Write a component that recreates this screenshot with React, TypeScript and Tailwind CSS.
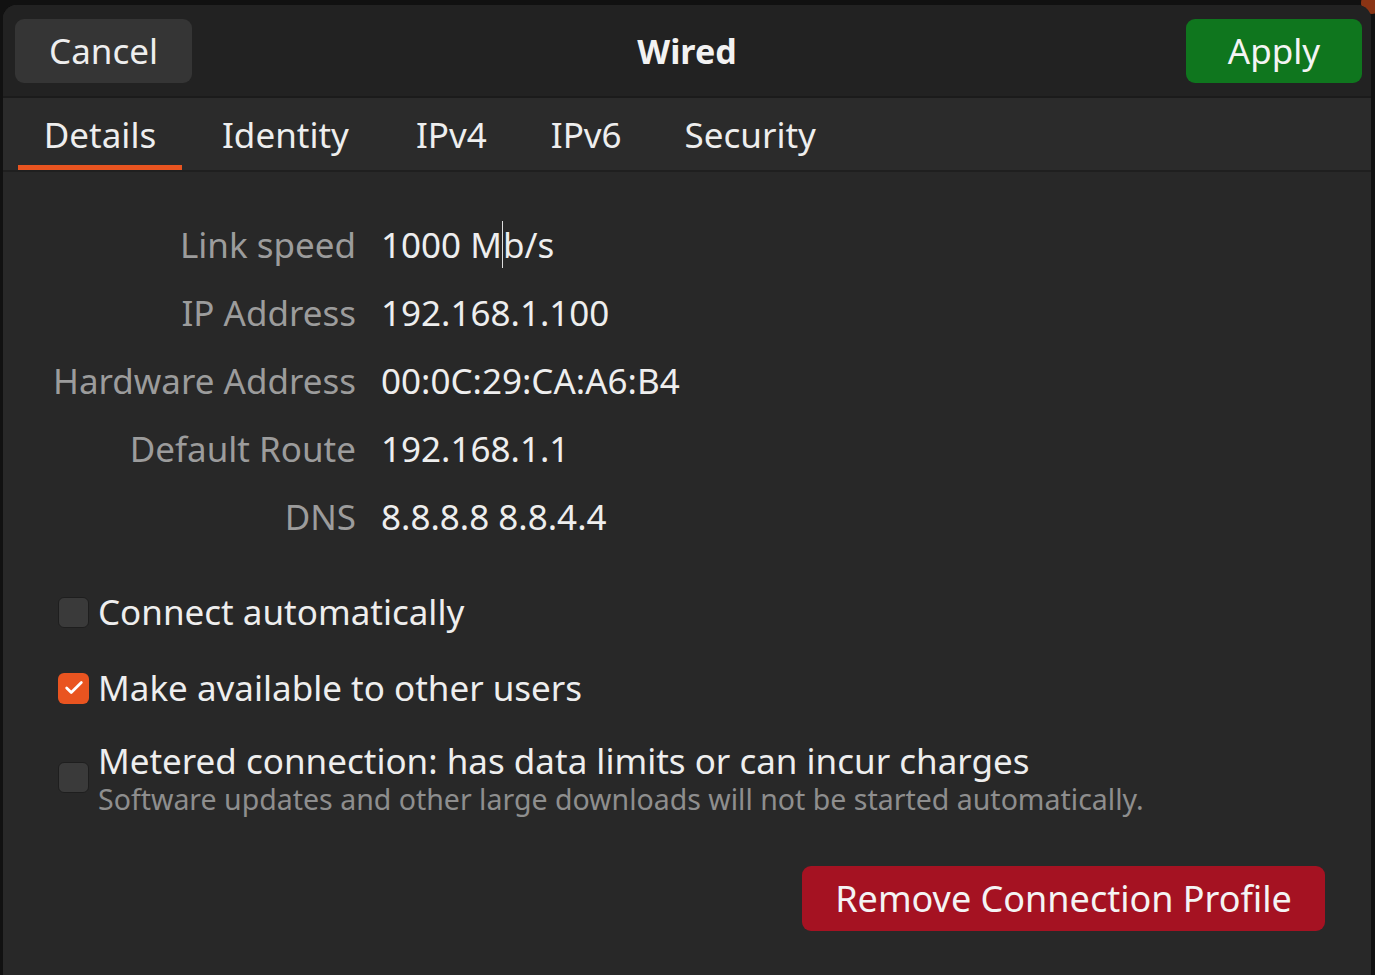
import { Check } from 'lucide-react';

const details = [
  { label: 'Link speed', value: '1000 Mb/s' },
  { label: 'IP Address', value: '192.168.1.100' },
  { label: 'Hardware Address', value: '00:0C:29:CA:A6:B4' },
  { label: 'Default Route', value: '192.168.1.1' },
  { label: 'DNS', value: '8.8.8.8 8.8.4.4' },
];

const tabs = [
  { name: 'Details', className: 'w-[164px] justify-center border-[#e95420]' },
  { name: 'Identity', className: 'pl-[40px] pr-[35px] border-transparent' },
  { name: 'IPv4', className: 'px-[32px] border-transparent' },
  { name: 'IPv6', className: 'pl-[32px] pr-[31px] border-transparent' },
  { name: 'Security', className: 'px-[32px] border-transparent' },
];

function Checkbox({ checked }: { checked?: boolean }) {
  return checked ? (
    <div className="flex h-[31px] w-[31px] shrink-0 items-center justify-center rounded-[6px] bg-[#e95420]">
      <Check className="h-[22px] w-[22px] text-white" strokeWidth={3} />
    </div>
  ) : (
    <div className="h-[31px] w-[31px] shrink-0 rounded-[6px] border border-[#1e1e1e] bg-[#3a3a3a]" />
  );
}

export default function App() {
  return (
    <div
      className="relative h-[975px] w-[1375px] overflow-hidden bg-[#111111] pl-[3px] pr-[4px] pt-[5px]"
      style={{ fontFamily: '"Noto Sans", "Open Sans", sans-serif' }}
    >
      {/* wallpaper peeking out */}
      <div className="absolute -right-[8px] -top-[8px] h-[22px] w-[22px] rounded-full bg-[#8a3414]" />

      <div className="relative flex h-full flex-col overflow-hidden rounded-t-[14px] bg-[#282828]">
        {/* Header bar */}
        <header className="relative flex h-[93px] shrink-0 items-center justify-between border-b-2 border-[#1b1b1b] bg-[#222222] pl-[12px] pr-[9px]">
          <button className="flex h-[64px] w-[177px] items-center justify-center rounded-[9px] bg-[#353535] pt-[2px] text-[35px] text-[#eeeeee]">
            Cancel
          </button>
          <div className="absolute left-1/2 -translate-x-1/2 pt-[2px] text-[34px] font-bold text-[#f2f2f2]">Wired</div>
          <button className="flex h-[64px] w-[176px] items-center justify-center rounded-[9px] bg-[#0f761e] pt-[2px] text-[35px] text-[#f4f4f4]">
            Apply
          </button>
        </header>

        {/* Tabs */}
        <nav className="flex h-[74px] shrink-0 items-stretch border-b-2 border-[#1f1f1f] bg-[#2b2b2b] pl-[15px]">
          {tabs.map(tab => (
            <div
              key={tab.name}
              className={'flex items-center border-b-[5px] pt-[8px] text-[35px] text-[#eeeeee] ' + tab.className}
            >
              {tab.name}
            </div>
          ))}
        </nav>

        {/* Content */}
        <main className="flex flex-1 flex-col pt-[39px]">
          <div className="grid grid-cols-[353px_1fr] gap-x-[25px]">
            {details.map(row => (
              <div key={row.label} className="contents">
                <div className="flex h-[68px] items-center justify-end text-[35px] text-[#9c9c9c]">{row.label}</div>
                <div className="flex h-[68px] items-center text-[35px] text-[#eeeeee]">
                  {row.label === 'Link speed' ? (
                    <span>
                      1000 M<span className="border-l border-[#dddddd]">b/s</span>
                    </span>
                  ) : (
                    row.value
                  )}
                </div>
              </div>
            ))}
          </div>

          <div className="mt-[30px] flex flex-col pl-[55px]">
            <label className="flex h-[62px] items-center gap-[9px] text-[35px] text-[#eeeeee]">
              <Checkbox />
              Connect automatically
            </label>
            <label className="mt-[14px] flex h-[62px] items-center gap-[9px] text-[35px] text-[#eeeeee]">
              <Checkbox checked />
              Make available to other users
            </label>
            <label className="mt-[20px] flex items-center gap-[9px]">
              <Checkbox />
              <div className="flex flex-col">
                <span className="text-[35px] leading-[44px] text-[#eeeeee]">
                  Metered connection: has data limits or can incur charges
                </span>
                <span className="text-[28.5px] leading-[32px] text-[#8e8e8e]">
                  Software updates and other large downloads will not be started automatically.
                </span>
              </div>
            </label>
          </div>

          <div className="mt-[51px] flex justify-end pr-[46px]">
            <button className="flex h-[65px] w-[523px] items-center justify-center rounded-[9px] bg-[#a51222] text-[36px] text-[#f4f4f4]">
              Remove Connection Profile
            </button>
          </div>
        </main>
      </div>
    </div>
  );
}
